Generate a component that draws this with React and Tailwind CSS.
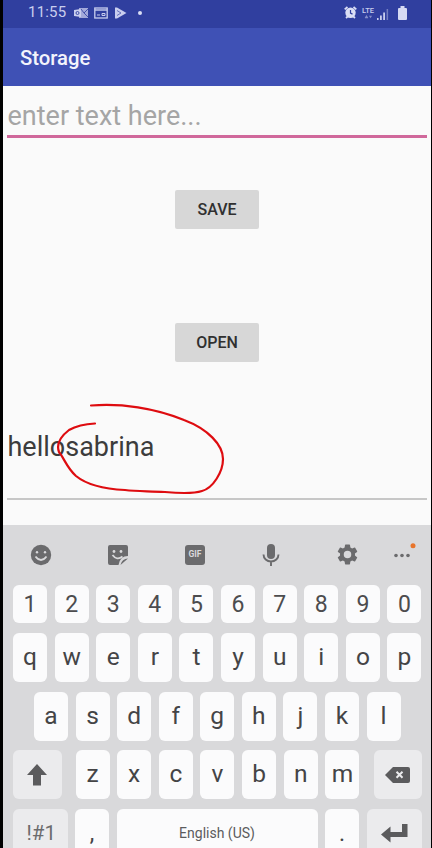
import React from "react";

function Key({ children, size = "w-[34px]", tone = "bg-[#fbfbfc]", text = "text-[24.5px] text-[#444446]", pad = "" }) {
  return (
    <div
      className={`flex h-full shrink-0 items-center justify-center rounded-[6px] leading-none ${size} ${tone} ${text} ${pad}`}
    >
      <span className="leading-none">{children}</span>
    </div>
  );
}

function StatusBar() {
  return (
    <div className="flex h-7 items-start justify-between bg-[#303f9f] pl-[25px] pr-[24px] text-[#c9ceee]">
      <div className="flex h-[25px] items-center">
        <span className="w-[46px] text-[15px] leading-none tracking-[0.2px]">11:55</span>
        <svg width="14" height="12" viewBox="0 0 14 12" fill="currentColor">
          <path d="M5 1h9v10H5z" opacity=".75" />
          <path d="M0 3l7-1v8l-7-1z" />
          <path d="M7 2l3 4 4-4M10 6l4 4" fill="none" stroke="#303f9f" strokeWidth=".8" />
          <circle cx="3.5" cy="6" r="1.5" fill="none" stroke="#303f9f" strokeWidth=".9" />
        </svg>
        <svg className="ml-[6px]" width="14" height="12" viewBox="0 0 14 12" fill="none" stroke="currentColor">
          <rect x=".8" y="1" width="12.4" height="10" strokeWidth="1.3" />
          <path d="M1 3h12" strokeWidth="1.4" />
          <path d="M3 8h3M8 6.5h3v2H8z" strokeWidth="1" />
        </svg>
        <svg className="ml-[7px]" width="12" height="12" viewBox="0 0 12 12">
          <path d="M0 .5h2L11.500 6 2 11.500H0z" fill="currentColor" />
          <path d="M2 3.500l4 2.500-4 2.500" fill="none" stroke="#6570bd" strokeWidth="1" />
        </svg>
        <span className="ml-[11px] h-[4px] w-[4px] rounded-full bg-[#dadef5]" />
      </div>
      <div className="flex h-[25px] items-center">
        <svg width="13" height="13" viewBox="0 0 13 13">
          <path d="M.7 3.4L3.5 1M12.3 3.4L9.5 1M2 12l1.800-1.700M11 12l-1.800-1.700" stroke="#dadef5" strokeWidth="1.8" />
          <circle cx="6.5" cy="6.8" r="5.200" fill="#dadef5" />
          <path d="M6.5 4v3.1l2 1" fill="none" stroke="#303f9f" strokeWidth="1.2" />
        </svg>
        <div className="ml-[4px] flex w-[14px] flex-col items-center">
          <span className="text-[7.5px] font-medium leading-[8px]">LTE</span>
          <svg width="9" height="4" viewBox="0 0 9 5" fill="currentColor" opacity=".55">
            <path d="M0 3l2-3 2 3v1H0zM5 1h4L7 4z" />
          </svg>
        </div>
        <svg className="ml-[2px] mt-[2px]" width="12" height="12" viewBox="0 0 12 12" fill="currentColor">
          <path d="M0 10h1.6v2H0zM3 7.5h1.8V12H3zM6.2 4.5H8V12H6.2z" />
          <path d="M9.6 1h1.5v11H9.6z" opacity=".45" />
        </svg>
        <svg className="ml-[9px]" width="9" height="14" viewBox="0 0 9 14" fill="#d6daf3">
          <path d="M2.5 0h4v2H8q1 0 1 1v10q0 1-1 1H1q-1 0-1-1V3q0-1 1-1h1.500z" />
        </svg>
      </div>
    </div>
  );
}

function Toolbar() {
  return (
    <div className="flex h-[59px] items-center pl-[27px] text-[#6b6b6d]">
      <svg className="shrink-0" width="22" height="22" viewBox="0 0 22 22">
        <circle cx="11" cy="11" r="10.200" fill="currentColor" />
        <circle cx="7" cy="8.300" r="1.200" fill="#d9d9db" />
        <circle cx="15" cy="8.300" r="1.200" fill="#d9d9db" />
        <path d="M5.500 12.500Q11 19.500 16.500 12.500" fill="none" stroke="#d9d9db" strokeWidth="1.800" />
      </svg>
      <svg className="ml-[55px] shrink-0" width="22" height="22" viewBox="0 0 22 22">
        <path d="M3 1h16q2 0 2 2v9q-8 0-9.500 9H3q-2 0-2-2V3q0-2 2-2z" fill="currentColor" />
        <path d="M21 14.500q-6 0-7.500 6.500z" fill="currentColor" />
        <circle cx="7" cy="7.500" r="1.400" fill="#d9d9db" />
        <circle cx="14" cy="7.500" r="1.400" fill="#d9d9db" />
        <path d="M5.500 11q4.500 6 10 1.500" fill="none" stroke="#d9d9db" strokeWidth="1.800" />
      </svg>
      <div className="ml-[56px] flex h-5 w-5 shrink-0 items-center justify-center rounded-[3px] bg-[#6b6b6d] text-[8.500px] font-bold leading-none text-[#d9d9db]">
        GIF
      </div>
      <svg className="ml-[57px] shrink-0" width="18" height="24" viewBox="0 0 18 24">
        <rect x="5" y="1" width="8" height="15" rx="4" fill="currentColor" />
        <path d="M1.500 11.500a7.500 7 0 0 0 15 0M9 18.500V23" fill="none" stroke="currentColor" strokeWidth="1.900" />
      </svg>
      <svg className="ml-[55px] shrink-0" width="25" height="25" viewBox="0 0 24 24" fill="currentColor">
        <path d="M19.140 12.940c.04-.3.060-.61.060-.94s-.02-.64-.07-.94l2.030-1.580a.49.49 0 0 0 .12-.61l-1.920-3.320a.49.49 0 0 0-.59-.22l-2.390.96a7 7 0 0 0-1.620-.94l-.36-2.540a.48.48 0 0 0-.48-.41h-3.840a.47.47 0 0 0-.47.41l-.36 2.540c-.59.24-1.130.57-1.620.94l-2.390-.96a.48.48 0 0 0-.59.22L2.740 8.870a.47.47 0 0 0 .12.610l2.030 1.580a6 6 0 0 0-.02 1.880l-2.030 1.580a.49.49 0 0 0-.12.610l1.920 3.320c.12.220.37.290.59.220l2.390-.96c.5.380 1.030.7 1.620.94l.36 2.540c.05.240.24.410.48.410h3.840c.24 0 .44-.17.47-.41l.36-2.540a7 7 0 0 0 1.620-.94l2.390.96c.22.080.47 0 .59-.22l1.920-3.320a.47.47 0 0 0-.12-.61zM12 15.600a3.600 3.600 0 1 1 0-7.200 3.600 3.600 0 0 1 0 7.200z" />
      </svg>
      <svg className="ml-[33px] shrink-0" width="24" height="24" viewBox="0 0 24 24">
        <circle cx="3" cy="12.500" r="1.800" fill="currentColor" />
        <circle cx="9" cy="12.500" r="1.800" fill="currentColor" />
        <circle cx="15" cy="12.500" r="1.800" fill="currentColor" />
        <circle cx="20" cy="2.800" r="2.500" fill="#e8752c" />
      </svg>
    </div>
  );
}

function Keyboard() {
  return (
    <div className="h-[323px] overflow-hidden bg-[#d9d9db]">
      <Toolbar />
      <div className="mt-px flex h-[38px] justify-between pl-[10px] pr-[9.5px]">
        {"1234567890".split("").map((k) => (
          <Key key={k} text="text-[23px] text-[#4c4c4e]">{k}</Key>
        ))}
      </div>
      <div className="mt-[10px] flex h-[49px] justify-between pl-[10px] pr-[9.5px]">
        {"qwertyuiop".split("").map((k) => (
          <Key key={k}>{k}</Key>
        ))}
      </div>
      <div className="mt-[9.5px] flex h-[49px] justify-between pl-[31px] pr-[30.5px]">
        {"asdfghjkl".split("").map((k) => (
          <Key key={k}>{k}</Key>
        ))}
      </div>
      <div className="mt-[9.5px] flex h-[49px] justify-between pl-[10px] pr-[9.5px]">
        <Key size="w-[48.5px]" tone="bg-[#ebebed]">
          <svg className="block" width="20" height="22" viewBox="0 0 20 22" fill="#5b5b5d">
            <path d="M10 0l10 11h-6v10.500H6V11H0z" />
          </svg>
        </Key>
        <div className="ml-[14px] mr-[14px] flex w-[284px] shrink-0 justify-between">
          {"zxcvbnm".split("").map((k) => (
            <Key key={k}>{k}</Key>
          ))}
        </div>
        <Key size="w-[48px]" tone="bg-[#ebebed]">
          <svg className="block" width="25" height="16" viewBox="0 0 25 16">
            <path d="M8 0h15q2 0 2 2v12q0 2-2 2H8L0 8z" fill="#5b5b5d" />
            <path d="M11.500 4.800l6 6M17.500 4.800l-6 6" stroke="#ebebed" strokeWidth="2" />
          </svg>
        </Key>
      </div>
      <div className="mt-[9.500px] flex h-[49px] justify-between pl-[10px] pr-[9.5px]">
        <Key size="w-[54.5px]" tone="bg-[#ebebed]" text="text-[20.5px] text-[#6b6b6d]" pad="pl-[2px]">!#1</Key>
        <Key text="text-[23px] text-[#444446]">,</Key>
        <Key size="w-[201px]" text="text-[14px] text-[#5b5b5d]">English (US)</Key>
        <Key text="text-[23px] text-[#444446]">.</Key>
        <Key size="w-[55px]" tone="bg-[#ebebed]">
          <svg className="block" width="27" height="19" viewBox="0 0 27 19" fill="#5b5b5d">
            <path d="M0 10.500L9.500 2.500v5.500H21V0h5.500v13h-17v5.500z" />
          </svg>
        </Key>
      </div>
    </div>
  );
}

export default function App() {
  return (
    <div className="h-[848px] w-[432px] overflow-hidden bg-black pl-[3px] pr-[1px] font-['Roboto',sans-serif]">
      <StatusBar />
      <div className="flex h-[58px] items-center bg-[#3f51b5] pl-[17px] pt-[2px] text-[20.3px] font-medium text-[#f3f4fc]">
        Storage
      </div>
      <div className="relative flex h-[439px] flex-col bg-[#fafafa]">
        <div className="ml-1 mr-1 flex h-[52px] items-center border-b-[3px] border-[#d0689b] pl-[0.500px] pt-[12px] text-[27px] leading-none text-[#a5a5a5]">
          enter text here...
        </div>
        <div className="ml-[172px] mt-[52px] flex h-[39px] w-[84px] items-center justify-center rounded-[2px] bg-[#d7d7d7] text-[16px] font-medium text-[#303030]">
          SAVE
        </div>
        <div className="ml-[172px] mt-[94px] flex h-[39px] w-[84px] items-center justify-center rounded-[2px] bg-[#d7d7d7] text-[16px] font-medium text-[#303030]">
          OPEN
        </div>
        <div className="ml-1 mr-1 mt-[52px] flex h-[86px] items-center border-b-2 border-[#c7c7c7] pb-[17px] pl-[0.500px] text-[27px] leading-none text-[#3c3c3c]">
          hellosabrina
        </div>
        <svg
          className="absolute left-[52px] top-[314px]"
          width="175"
          height="96"
          viewBox="55 400 175 96"
          fill="none"
          stroke="#de0c10"
          strokeWidth="2.200"
          strokeLinecap="round"
          strokeLinejoin="round"
        >
          <path d="M91 405.500C121 403 155 408 184 420C208 429 223 445 223 459C223 472 213 488 202 491C193 494 176 493 165 492C148 491 137 491.500 125 490C105 489 87 485 76 476C67 468 64 458 59 452C56 444 60 437 69 430C78 425 86 424 95 423.500" />
        </svg>
      </div>
      <Keyboard />
    </div>
  );
}
